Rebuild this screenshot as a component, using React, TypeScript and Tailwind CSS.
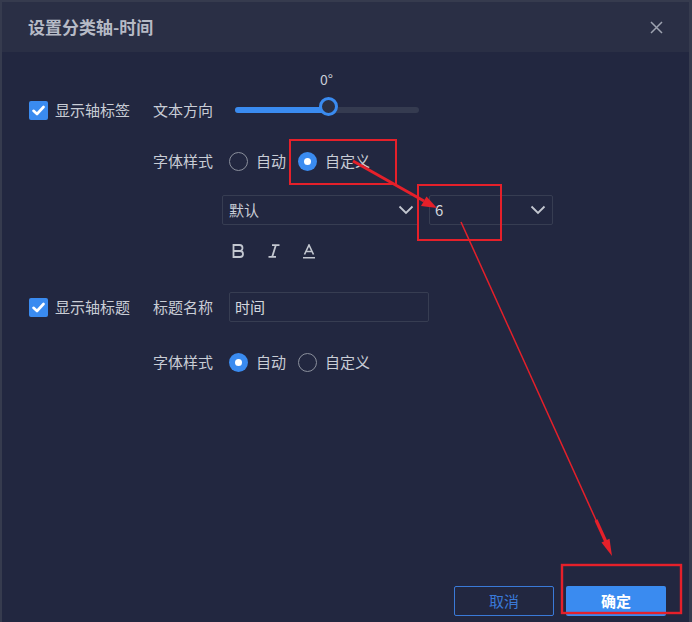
import React from 'react';

const font = { fontFamily: '"Noto Sans CJK SC", "Noto Sans", sans-serif' };

const Checkbox: React.FC = () => (
  <span className="flex h-[19px] w-[19px] items-center justify-center rounded-[2px] bg-[#3a8bf0]">
    <svg width="13" height="11" viewBox="0 0 13 11">
      <path d="M1.5 5.8 L5 9 L11.5 2" fill="none" stroke="#fff" strokeWidth="2.6" strokeLinecap="round" strokeLinejoin="round" />
    </svg>
  </span>
);

const Radio: React.FC<{ checked?: boolean; label: string }> = ({ checked, label }) => (
  <div className="flex items-center gap-[8px] mr-[12px]">
    {checked ? (
      <span className="flex h-[19px] w-[19px] items-center justify-center rounded-full bg-[#3a8bf0]">
        <span className="h-[7px] w-[7px] rounded-full bg-white" />
      </span>
    ) : (
      <span className="h-[19px] w-[19px] rounded-full border border-[#8a8f9c]" />
    )}
    <span className="text-[15px] text-[#c9cdd6]">{label}</span>
  </div>
);

const Chevron: React.FC = () => (
  <svg width="16" height="10" viewBox="0 0 16 10">
    <path d="M1.5 1.5 L8 8 L14.5 1.5" fill="none" stroke="#c3c7d0" strokeWidth="1.8" />
  </svg>
);

const Label: React.FC<{ children: React.ReactNode }> = ({ children }) => (
  <span className="w-[76px] shrink-0 text-[15px] text-[#c9cdd6]">{children}</span>
);

const FontRadios: React.FC<{ custom?: boolean }> = ({ custom }) => (
  <div className="flex h-[30px] items-center pl-[124px]">
    <Label>字体样式</Label>
    <Radio label="自动" checked={!custom} />
    <Radio label="自定义" checked={custom} />
  </div>
);

export default function App() {
  return (
    <div className="relative h-[622px] w-[692px] overflow-hidden bg-[#363b4e]" style={font}>
      <div className="ml-[2px] mt-[2px] flex h-[620px] w-[687px] flex-col bg-[#222740]">
        {/* header */}
        <div className="flex h-[50px] shrink-0 items-center justify-between bg-[#2a2f45] pl-[26px] pr-[26px]">
          <span className="text-[17px] font-bold text-[#b6bac6]">设置分类轴-时间</span>
          <svg width="13" height="13" viewBox="0 0 13 13">
            <path d="M1 1 L12 12 M12 1 L1 12" stroke="#9ea3b1" strokeWidth="1.5" />
          </svg>
        </div>

        {/* body */}
        <div className="flex flex-1 flex-col pl-[27px] pt-[43px]">
          <div className="flex h-[30px] items-center">
            <div className="flex w-[124px] items-center gap-[7px]">
              <Checkbox />
              <span className="text-[15px] text-[#c9cdd6]">显示轴标签</span>
            </div>
            <Label>文本方向</Label>
            <div className="relative ml-[6px] h-[6px] w-[184px] rounded-full bg-[#353b50]">
              <div className="h-[6px] w-[93px] rounded-full bg-[#3a8bf0]" />
              <span className="absolute left-[84px] top-[-10px] h-[19px] w-[19px] rounded-full border-[3px] border-[#3a8bf0] bg-[#2a2f43]" />
              <span className="absolute left-[85px] top-[-38px] text-[14px] text-[#c9cdd6]">0°</span>
            </div>
          </div>

          <div className="mt-[21px]">
            <FontRadios custom />
          </div>

          <div className="mt-[19px] flex h-[30px] gap-[10px] pl-[193px]">
            <div className="flex w-[197px] items-center justify-between rounded-[2px] border border-[#373d52] pl-[6px] pr-[4px]">
              <span className="text-[15px] text-[#c9cdd6]">默认</span>
              <Chevron />
            </div>
            <div className="flex w-[124px] items-center justify-between rounded-[2px] border border-[#373d52] pl-[5px] pr-[6px]">
              <span className="text-[15px] text-[#d4d7de]">6</span>
              <Chevron />
            </div>
          </div>

          <div className="mt-[11px] flex h-[30px] items-center pl-[203px]">
            <svg width="12" height="14" viewBox="0 0 12 14" className="mr-[24px]">
              <path d="M1.5 1 H7.5 A3 3 0 0 1 7.5 7 H1.5 Z M1.5 7 H8 A3 3 0 0 1 8 13 H1.5 Z" fill="none" stroke="#c3c7d0" strokeWidth="1.8" />
            </svg>
            <svg width="12" height="14" viewBox="0 0 12 14" className="mr-[22px]">
              <path d="M4 1.2 H11.5 M0.5 12.8 H8 M7.8 1.2 L4.2 12.8" fill="none" stroke="#c3c7d0" strokeWidth="1.8" />
            </svg>
            <svg width="14" height="15" viewBox="0 0 14 15">
              <path d="M2.5 10.5 L7 1 L11.5 10.5 M4 7.5 H10 M1 13.8 H13" fill="none" stroke="#c3c7d0" strokeWidth="1.6" />
            </svg>
          </div>

          <div className="mt-[26px] flex h-[30px] items-center">
            <div className="flex w-[124px] items-center gap-[7px]">
              <Checkbox />
              <span className="text-[15px] text-[#c9cdd6]">显示轴标题</span>
            </div>
            <Label>标题名称</Label>
            <div className="flex h-[30px] w-[200px] items-center rounded-[2px] border border-[#373d52] pl-[5px]">
              <span className="text-[15px] text-[#d4d7de]">时间</span>
            </div>
          </div>

          <div className="mt-[25px]">
            <FontRadios />
          </div>
        </div>

        {/* footer */}
        <div className="flex justify-end gap-[12px] pb-[6px] pr-[23px]">
          <button className="h-[30px] w-[100px] rounded-[2px] border border-[#3a7ad8] text-[15px] text-[#3a7ad8]">取消</button>
          <button className="h-[30px] w-[100px] rounded-[2px] bg-[#3a8bf0] text-[15px] font-bold text-white">确定</button>
        </div>
      </div>

      {/* red annotations */}
      <svg className="pointer-events-none absolute left-0 top-0" width="692" height="622" viewBox="0 0 692 622">
        <g fill="none" stroke="#e5202a" strokeWidth="2">
          <rect x="290" y="140" width="106" height="44" />
          <rect x="418" y="185" width="83" height="55" />
          <rect x="562" y="565" width="119" height="48" strokeWidth="2.4" />
        </g>
        <line x1="353" y1="161" x2="424" y2="201" stroke="#e5202a" strokeWidth="3" />
        <polygon points="437,208 421,206 426.5,196.5" fill="#e5202a" />
        <line x1="461" y1="222" x2="600" y2="529" stroke="#e5202a" strokeWidth="1.5" />
        <line x1="596" y1="520" x2="606" y2="542" stroke="#e5202a" strokeWidth="3.2" />
        <polygon points="612,556 601.5,542.5 609.5,538.7" fill="#e5202a" />
      </svg>
    </div>
  );
}
